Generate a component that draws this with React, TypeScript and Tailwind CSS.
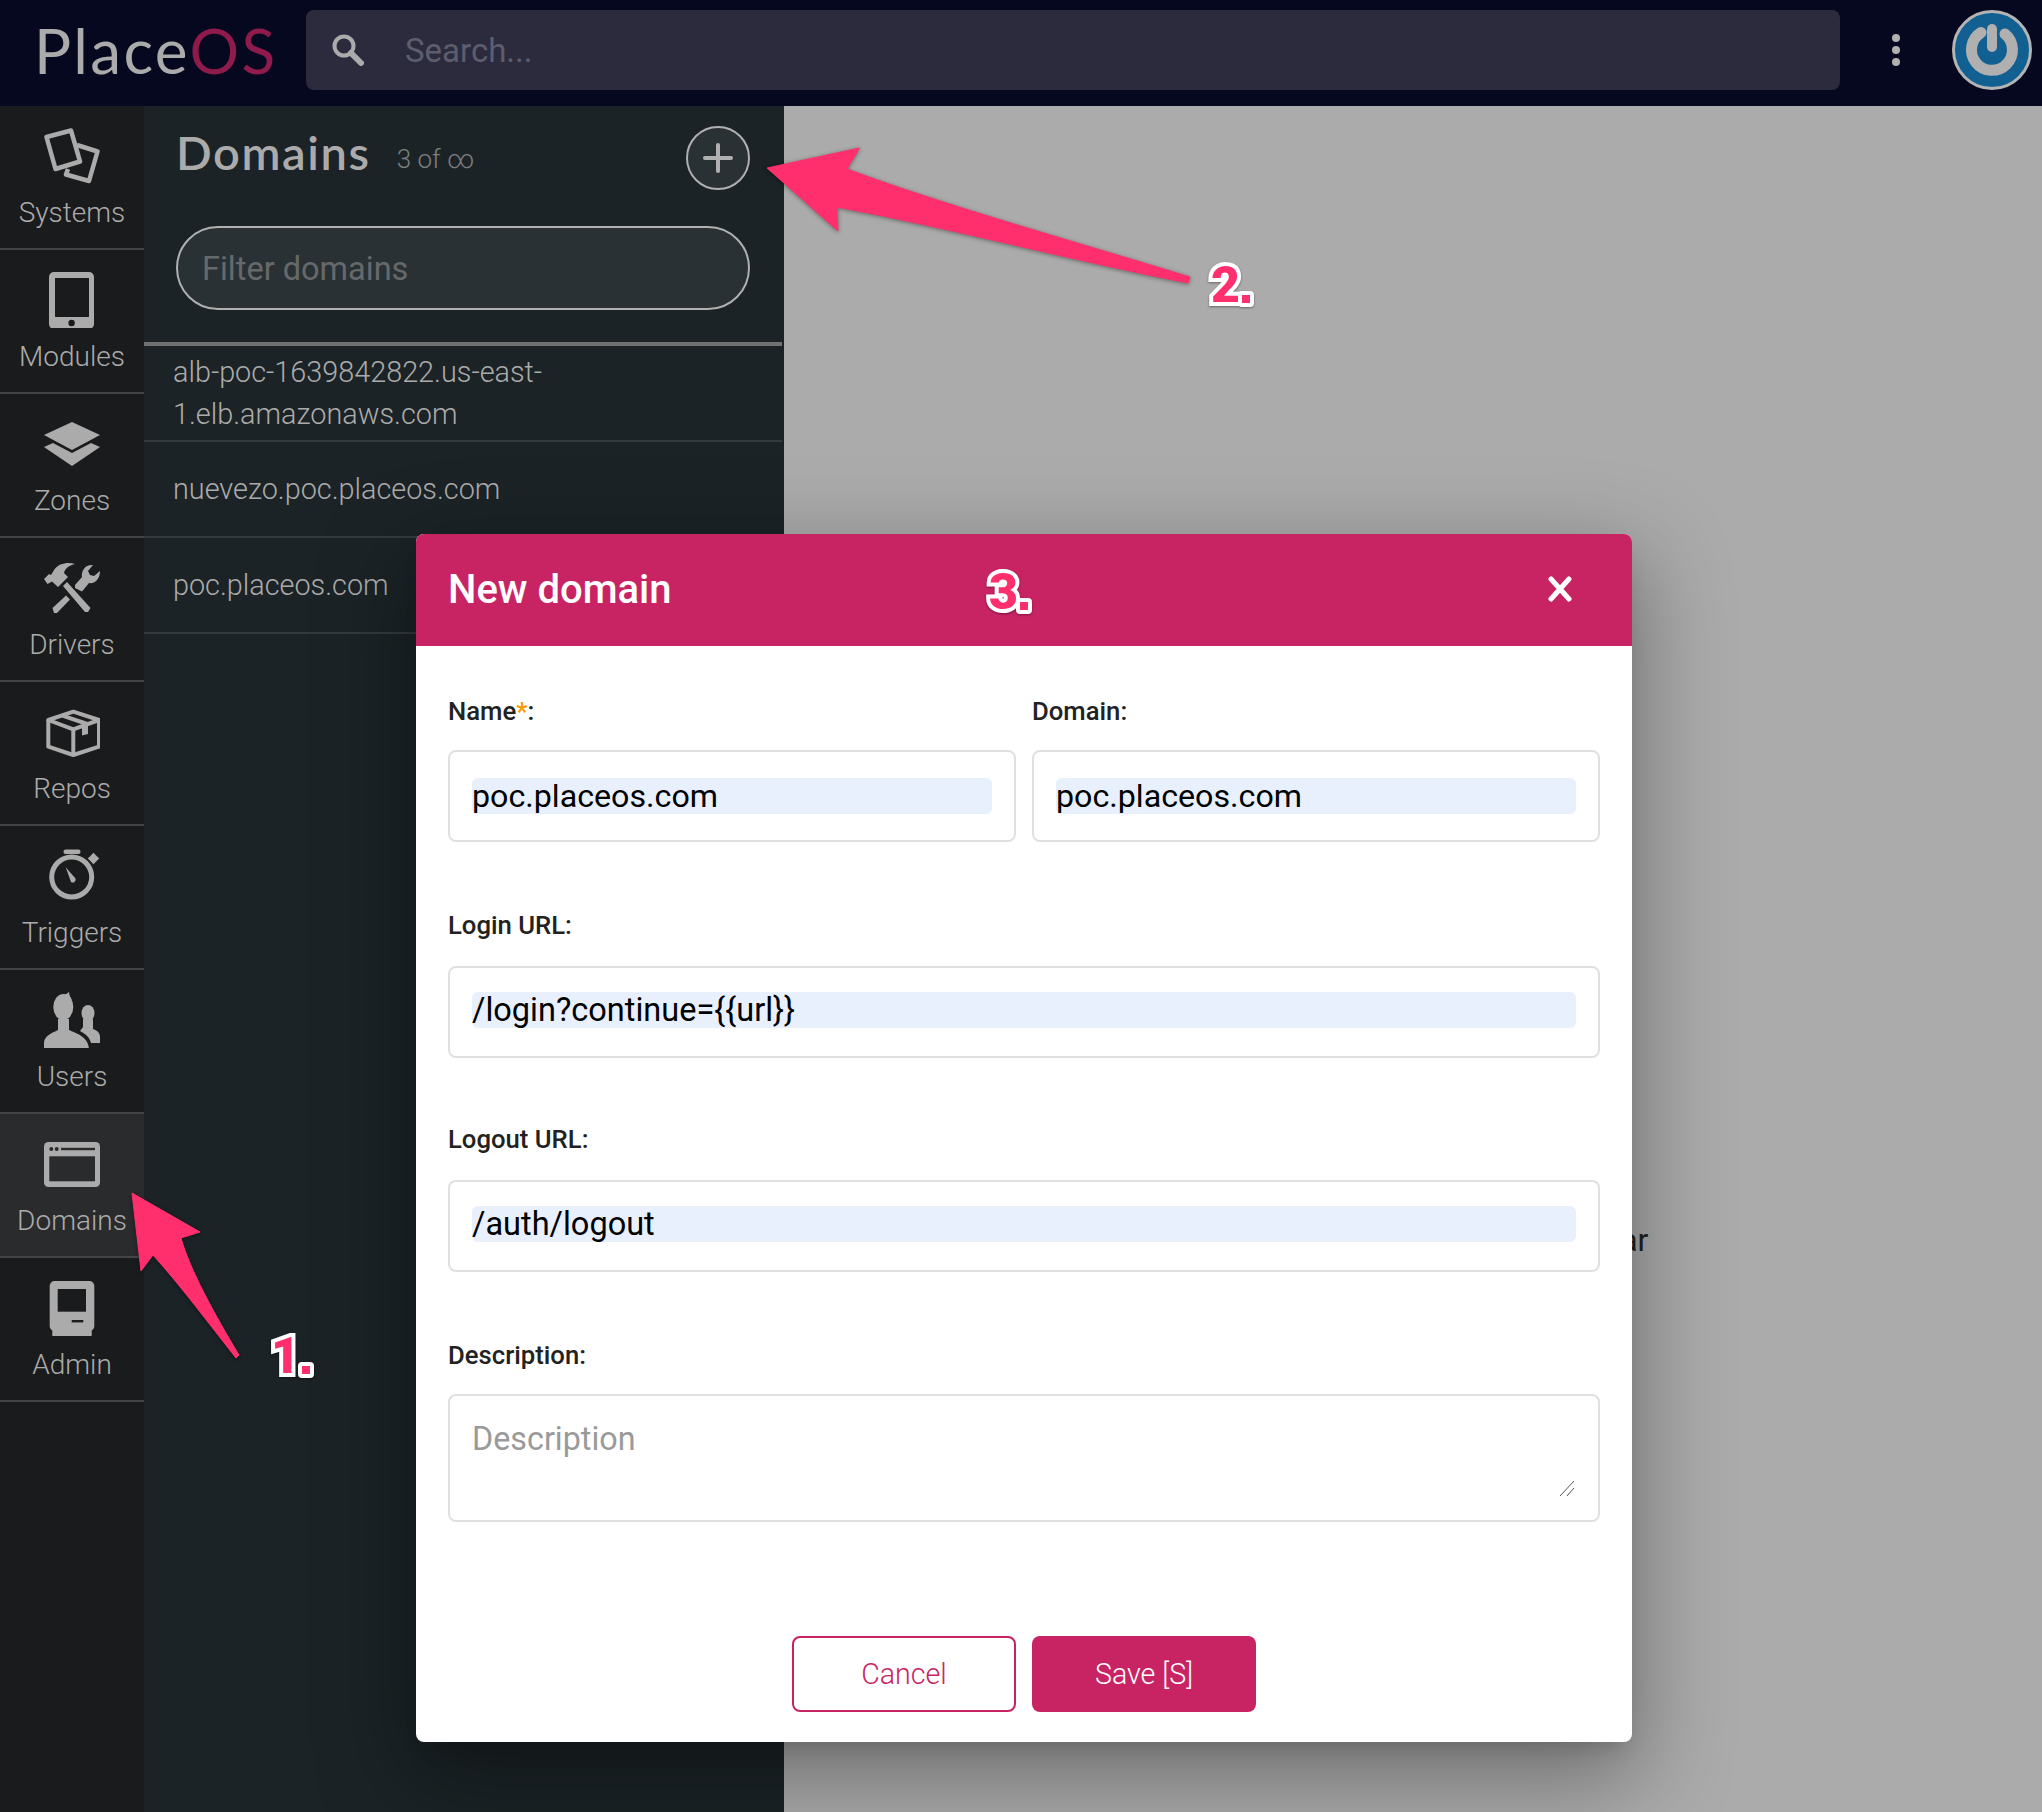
import React from 'react';

const GREY = '#ababab';

const SystemsIcon = () => (
  <svg width="56" height="56" viewBox="0 0 56 56" fill="none" stroke={GREY} strokeWidth="4.5" strokeLinejoin="round">
    <path d="M2.5 9 L27 2.5 L36 33.5 L11.5 41 Z" />
    <path d="M33 17 L53.5 23.5 L45 53 L22 46.5 L24 41" />
  </svg>
);

const ModulesIcon = () => (
  <svg width="56" height="56" viewBox="0 0 56 56" fill={GREY}>
    <path fillRule="evenodd" d="M10 0 H45 A5 5 0 0 1 50 5 V52 A5 5 0 0 1 45 57 H10 A5 5 0 0 1 5 52 V5 A5 5 0 0 1 10 0 Z M11 6 V45 H45 V6 Z" />
    <circle cx="27.6" cy="51" r="3.2" fill="#1a1b1d" />
  </svg>
);

const ZonesIcon = () => (
  <svg width="56" height="56" viewBox="0 0 56 56" fill={GREY}>
    <path d="M28 6 L56 19 L28 34 L0 19 Z" />
    <path d="M0 31 L9 27 L28 37 L47 27 L56 31 L28 50 Z" />
  </svg>
);

const DriversIcon = () => (
  <svg width="56" height="56" viewBox="0 0 56 56" fill={GREY}>
    <path d="M0 19 L3.5 24 L8 21.5 L14 27 L24 17 L20 13 C21 8 26 5 31 4 C24 2 15 3 10 10 L7 15 L5 14 Z" />
    <path d="M19 26 L23 22 L46.5 48 L44 52 L41 52 Z" />
    <path d="M8.5 48 L22 35.5 L26 39.5 L13 53 L10 53 Z" />
    <path d="M31 28 L38 31.5 L45 23 C51 24 56 19 56 11 L50 16 L46 15 L44 11 L49 5 C42 4 37 10 38 17 L31 25 Z" />
  </svg>
);

const ReposIcon = () => (
  <svg width="56" height="56" viewBox="0 0 56 56" fill="none" stroke={GREY} strokeWidth="4" strokeLinejoin="round">
    <path d="M29.3 7.7 L55 16 L29.3 25.3 L4.3 16 Z" />
    <path d="M4.3 16 V42.7 L29.3 51 L55 42.7 V16" />
    <path d="M29.3 25.3 V51" />
    <path d="M17.7 11.3 L43.3 20" />
    <path d="M38 23.3 L44 21 V30 L38 31.5 Z" fill={GREY} stroke="none" />
  </svg>
);

const TriggersIcon = () => (
  <svg width="56" height="56" viewBox="0 0 56 56" fill="none">
    <circle cx="27.7" cy="29" r="20" stroke={GREY} strokeWidth="5" />
    <rect x="19.5" y="1.5" width="17" height="4.5" rx="2" fill={GREY} />
    <rect x="45.5" y="6.5" width="8" height="8" transform="rotate(45 49.5 10.5)" fill={GREY} />
    <path d="M21.7 19.3 L31.5 30.5 A3 3 0 0 1 27 34 Z" fill={GREY} />
  </svg>
);

const UsersIcon = () => (
  <svg width="56" height="56" viewBox="0 0 56 56" fill={GREY}>
    <ellipse cx="19.3" cy="15" rx="10" ry="13" />
    <path d="M17 4 C20 3 23 2 25 0 C25 3 27 6 28 8 Z" />
    <path d="M0 57.7 V51 C0 44 8 41 14 38 V27 H25 V38 C32 41 45 45 45 57.7 Z" />
    <ellipse cx="44" cy="21" rx="6.5" ry="8" />
    <path d="M39 27 H49 V37 C52 38 56 40 56 45 V51 H47 C46 46 42 42 36 39 L39 35 Z" />
  </svg>
);

const DomainsIcon = () => (
  <svg width="56" height="56" viewBox="0 0 56 56" fill={GREY}>
    <rect x="0" y="6" width="56" height="45" rx="4.5" />
    <rect x="5.3" y="20.3" width="45.7" height="25" fill="#2a2b2d" />
    <circle cx="7.3" cy="13" r="2" fill="#2a2b2d" />
    <circle cx="12.7" cy="13" r="2" fill="#2a2b2d" />
    <rect x="17" y="11.8" width="34" height="2.4" fill="#2a2b2d" />
  </svg>
);

const AdminIcon = () => (
  <svg width="56" height="56" viewBox="0 0 56 56" fill={GREY}>
    <rect x="5.7" y="1" width="44.6" height="50" rx="5" />
    <rect x="8.3" y="48" width="39.4" height="9" />
    <rect x="13.7" y="9" width="28.3" height="22.7" fill="#1a1b1d" />
    <rect x="27.7" y="40" width="11.6" height="2.4" fill="#1a1b1d" />
  </svg>
);

const railItems = [
  { label: 'Systems', icon: <SystemsIcon /> },
  { label: 'Modules', icon: <ModulesIcon /> },
  { label: 'Zones', icon: <ZonesIcon /> },
  { label: 'Drivers', icon: <DriversIcon /> },
  { label: 'Repos', icon: <ReposIcon /> },
  { label: 'Triggers', icon: <TriggersIcon /> },
  { label: 'Users', icon: <UsersIcon /> },
  { label: 'Domains', icon: <DomainsIcon />, active: true },
  { label: 'Admin', icon: <AdminIcon /> },
];

const domains = ['alb-poc-1639842822.us-east-1.elb.amazonaws.com', 'nuevezo.poc.placeos.com', 'poc.placeos.com'];

const Field = ({ label, value, className }: { label: string; value: string; className?: string }) => (
  <div className={className}>
    <div className="h-[30px] mb-[26px] text-[25.7px] leading-[30px] font-medium text-[#222222]">{label}:</div>
    <div className="h-[92px] border-2 border-[#e0e0e0] rounded-[8px] px-[22px] pb-[4px] flex items-center">
      <input
        readOnly
        value={value}
        className="w-full h-[36px] bg-[#e8f0fe] rounded-[6px] text-[32.5px] leading-[36px] text-black outline-none"
      />
    </div>
  </div>
);

// hand drawn step number from the annotation layer
const StepMark = ({ step, className }: { step: string; className: string }) => (
  <div className={`absolute flex items-end drop-shadow-[0_1px_1px_rgba(0,0,0,0.4)] ${className}`}>
    <span className="text-[50px] leading-[44px] font-black text-[#ff2f6e] [-webkit-text-stroke:8px_white] [paint-order:stroke_fill]">{step}</span>
    <span className="w-[16px] h-[16px] ml-[-2px] border-4 border-white bg-[#ff2f6e] rounded-[4px]" />
  </div>
);

const App = () => {
  return (
    <div className="relative w-full h-screen overflow-hidden flex flex-col bg-[#ababab] font-['Roboto',sans-serif]">
      {/* top bar */}
      <header className="h-[106px] shrink-0 bg-[#06081f] flex items-center pb-[6px]">
        <div className="w-[306px] shrink-0 pl-[34px] text-[62px] leading-none tracking-[2.3px] font-['Lato',sans-serif] font-normal text-[#ababab]">
          Place<span className="text-[#8f1b4d]">OS</span>
        </div>
        <div className="w-[1534px] h-[80px] bg-[#2b2b3d] rounded-[8px] flex items-center pl-[26px]">
          <svg width="32" height="32" viewBox="0 0 32 32" fill="none" stroke={GREY}>
            <circle cx="12" cy="12" r="9.5" strokeWidth="4" />
            <path d="M19 19 L29 29" strokeWidth="6" strokeLinecap="round" />
          </svg>
          <span className="ml-[41px] pt-[2px] text-[33px] text-[#5c5d6e]">Search...</span>
        </div>
        <div className="ml-[52px] flex flex-col gap-[4px]">
          <span className="w-[8px] h-[8px] rounded-full bg-[#b0b0b0]" />
          <span className="w-[8px] h-[8px] rounded-full bg-[#b0b0b0]" />
          <span className="w-[8px] h-[8px] rounded-full bg-[#b0b0b0]" />
        </div>
        <svg className="ml-[52px]" width="80" height="80" viewBox="0 0 80 80" fill="none">
          <circle cx="40" cy="40" r="38.5" fill="#125f92" stroke="#b4b4b4" strokeWidth="3" />
          <path d="M29 22.5 A20.5 20.5 0 1 0 53 24" stroke="#b0b0b0" strokeWidth="11" strokeLinecap="round" />
          <path d="M40 19 V37" stroke="#b0b0b0" strokeWidth="10" strokeLinecap="round" />
        </svg>
      </header>

      <div className="flex-1 flex min-h-0">
        {/* side nav */}
        <nav className="w-[144px] shrink-0 bg-[#1a1b1d]">
          {railItems.map((item) => (
            <div
              key={item.label}
              className={`h-[144px] border-b-2 border-[#444546] flex flex-col items-center pt-[22px] ${item.active ? 'bg-[#2a2b2d]' : ''}`}
            >
              {item.icon}
              <div className="mt-[13px] text-[28px] leading-[32px] font-light text-[#ababab]">{item.label}</div>
            </div>
          ))}
        </nav>

        {/* domains list */}
        <aside className="w-[640px] shrink-0 bg-[#1b2326] border-r-2 border-[#1b2326]">
          <div className="h-[84px] pt-[20px] pl-[32px] pr-[32px] flex items-center justify-between">
            <div className="flex items-baseline -mt-[11px]">
              <span className="text-[47px] font-['Lato',sans-serif] font-semibold tracking-[1.6px] text-[#ababab]">Domains</span>
              <span className="ml-[26px] -translate-y-[2px] text-[26px] font-light text-[#7c7f81]">3 of ∞</span>
            </div>
            <button className="w-[64px] h-[64px] rounded-full bg-[#2a3134] border-2 border-[#b0b0b0] flex items-center justify-center">
              <svg width="30" height="30" viewBox="0 0 30 30" stroke="#b0b0b0" strokeWidth="4" strokeLinecap="round">
                <path d="M15 2 V28 M2 15 H28" />
              </svg>
            </button>
          </div>
          <div className="mt-[36px] ml-[32px] mr-[32px] h-[84px] rounded-full bg-[#2a3134] border-2 border-[#b0b0b0] flex items-center pl-[24px] pt-[3px] text-[32.5px] text-[#66696b]">
            Filter domains
          </div>
          <div className="mt-[32px] border-t-4 border-[#6f7172]">
            {domains.map((domain) => (
              <div key={domain} className="min-h-[96px] border-b-2 border-[#333a3d] pl-[29px] pr-[28px] flex items-center text-[28.8px] leading-[42px] font-light text-[#ababab] break-words">
                <span className="w-[420px]">{domain}</span>
              </div>
            ))}
          </div>
        </aside>

        <main className="flex-1 flex flex-col items-center pt-[1114px] text-[32px] leading-[40px] text-[#222222]">
          Select a domain from the sidebar
        </main>
      </div>

      {/* new domain modal */}
      <div className="absolute left-[416px] top-[534px] w-[1216px] h-[1208px] rounded-[8px] bg-white overflow-hidden flex flex-col shadow-[0_14px_20px_-9px_rgba(0,0,0,0.15),0_31px_90px_8px_rgba(0,0,0,0.34)]">
        <div className="h-[112px] shrink-0 bg-[#c82464] pl-[32px] pr-[60px] flex items-center justify-between text-white">
          <span className="text-[40px] font-medium">New domain</span>
          <svg className="-mt-[2px]" width="24" height="26" viewBox="0 0 24 26" stroke="white" strokeWidth="5" strokeLinecap="round">
            <path d="M3 3 L21 23 M21 3 L3 23" />
          </svg>
        </div>
        <div className="flex-1 px-[32px] pt-[50px]">
          <div className="grid grid-cols-2 gap-x-[16px]">
            <div>
              <div className="h-[30px] mb-[24px] text-[25.7px] leading-[30px] font-medium text-[#222222]">
                Name<span className="text-[#ff9800]">*</span>:
              </div>
              <div className="h-[92px] border-2 border-[#e0e0e0] rounded-[8px] px-[22px] flex items-center">
                <input readOnly value="poc.placeos.com" className="w-full h-[36px] bg-[#e8f0fe] rounded-[6px] text-[32.2px] leading-[36px] text-black outline-none" />
              </div>
            </div>
            <div>
              <div className="h-[30px] mb-[24px] text-[25.7px] leading-[30px] font-medium text-[#222222]">Domain:</div>
              <div className="h-[92px] border-2 border-[#e0e0e0] rounded-[8px] px-[22px] flex items-center">
                <input readOnly value="poc.placeos.com" className="w-full h-[36px] bg-[#e8f0fe] rounded-[6px] text-[32.2px] leading-[36px] text-black outline-none" />
              </div>
            </div>
          </div>
          <Field className="mt-[68px]" label="Login URL" value="/login?continue={{url}}" />
          <Field className="mt-[66px]" label="Logout URL" value="/auth/logout" />
          <div className="mt-[68px]">
            <div className="h-[30px] mb-[24px] text-[25.7px] leading-[30px] font-medium text-[#222222]">Description:</div>
            <div className="relative h-[128px] border-2 border-[#e0e0e0] rounded-[8px] px-[22px] pt-[23px]">
              <textarea
                placeholder="Description"
                className="block w-full h-[76px] resize-none text-[32.3px] leading-[40px] outline-none placeholder:text-[#9a9a9a]"
              />
              {/* resize handle */}
              <svg className="absolute right-[23px] bottom-[24px]" width="16" height="16" viewBox="0 0 16 16" stroke="#555555" strokeWidth="1">
                <path d="M1 16 L15 1 M8 16 L15 8" />
              </svg>
            </div>
          </div>
        </div>
        <div className="h-[106px] shrink-0 flex justify-center gap-[16px]">
          <button className="w-[224px] h-[76px] rounded-[8px] border-2 border-[#c82464] text-[#c82464] text-[28.6px] font-light">Cancel</button>
          <button className="w-[224px] h-[76px] rounded-[8px] bg-[#c82464] text-white text-[28.6px] font-light">Save [S]</button>
        </div>
      </div>

      {/* annotation arrows */}
      <svg className="absolute left-0 top-0 pointer-events-none drop-shadow-[0_1px_2px_rgba(0,0,0,0.4)]" width="1300" height="1420" viewBox="0 0 1300 1420" fill="#ff2f6e" stroke="#ff2f6e" strokeLinejoin="round">
        <path d="M132 1193 L200 1232 L181 1238 C190 1270 215 1315 239 1355 L236 1358 C210 1325 180 1285 153 1255 L141 1271 Z" strokeWidth="1" />
        <path d="M767 168 L859.5 148 L847 169 C950 207 1070 240 1190 277 L1188 283 C1070 260 950 228 837 207 L838 231 Z" strokeWidth="1" />
      </svg>
      <StepMark step="1" className="left-[271px] top-[1334px]" />
      <StepMark step="2" className="left-[1211px] top-[263px]" />
      <StepMark step="3" className="left-[989px] top-[570px]" />
    </div>
  );
};

export default App;
